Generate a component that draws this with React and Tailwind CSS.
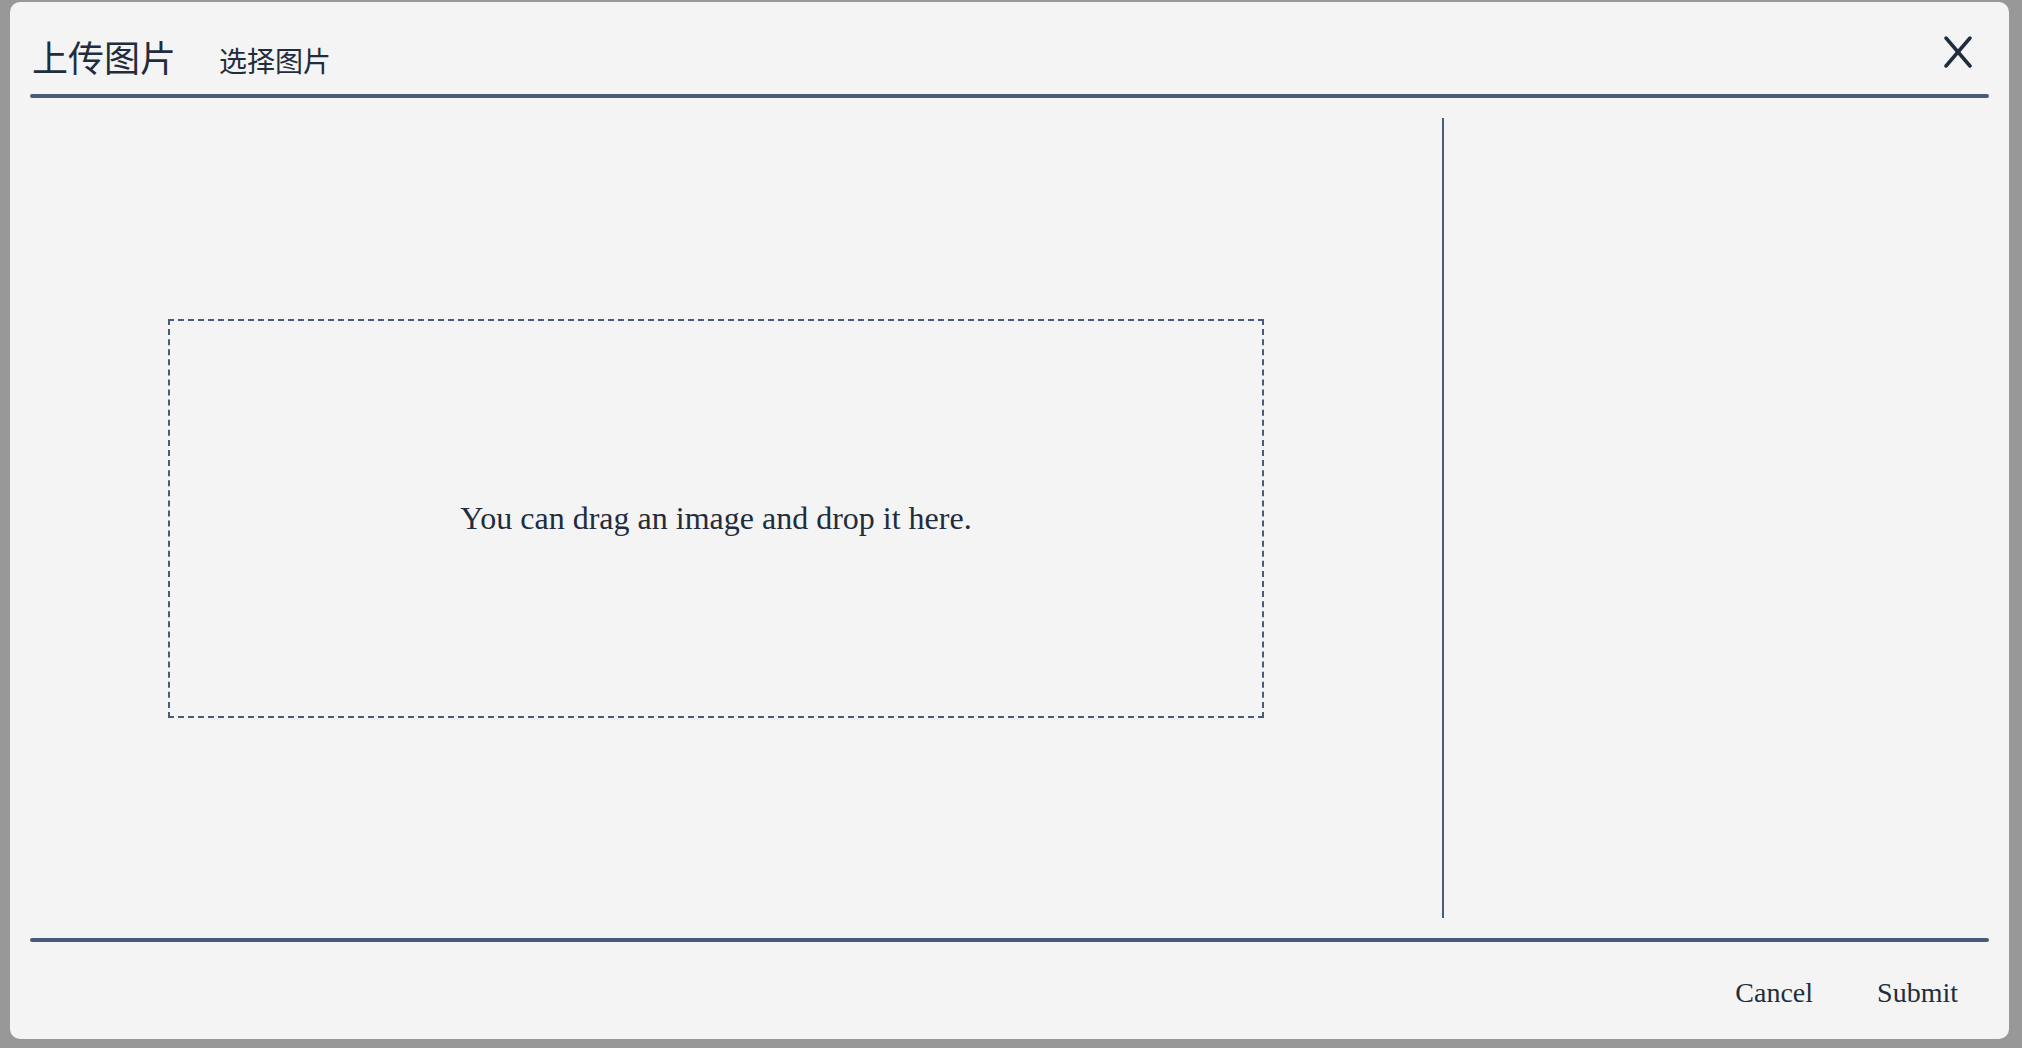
export default function App() {
  const serif = { fontFamily: '"Liberation Serif", "Noto Sans CJK SC", serif' };
  return (
    <div className="w-[2022px] h-[1048px] bg-[#989898] pt-[2px] pl-[10px] overflow-hidden" style={serif}>
      <div className="w-[1999px] h-[1037px] rounded-[10px] bg-[#f4f4f4] px-[20px] flex flex-col text-[#1f2d3d]">
        {/* header */}
        <div className="h-[92px] flex items-end justify-between">
          <div className="flex items-end pl-[2px] pb-[14px]">
            <h1 className="text-[36px] leading-[40px] font-normal">上传图片</h1>
            <span className="ml-[43px] text-[28px] leading-[32px] pb-[1px]">选择图片</span>
          </div>
          <button className="mb-[26px] mr-[17px] w-[28px] h-[32px]">
            <svg width="28" height="32" viewBox="0 0 28 32" fill="none" stroke="#1f2d3d" strokeWidth="3.5" strokeLinecap="round">
              <path d="M2 2 L26 30" />
              <path d="M26 2 L2 30" />
            </svg>
          </button>
        </div>
        <div className="h-[4px] rounded-full bg-[#485b78]" />

        {/* body */}
        <div className="flex pt-[20px] pb-[20px]">
          <div className="w-[1414px] h-[800px] border-r-2 border-[#485b78] flex items-center">
            <div className="ml-[138px] w-[1096px] h-[399px] border-2 border-dashed border-[#485b78] flex items-center justify-center">
              <p className="text-[32px] leading-[36px]">You can drag an image and drop it here.</p>
            </div>
          </div>
          <div className="flex-1" />
        </div>
        <div className="h-[4px] rounded-full bg-[#485b78]" />

        {/* footer */}
        <div className="flex justify-end gap-[64px] pr-[31px] pt-[33px]">
          <button className="text-[28px] leading-[36px]">Cancel</button>
          <button className="text-[28px] leading-[36px]">Submit</button>
        </div>
      </div>
    </div>
  );
}
